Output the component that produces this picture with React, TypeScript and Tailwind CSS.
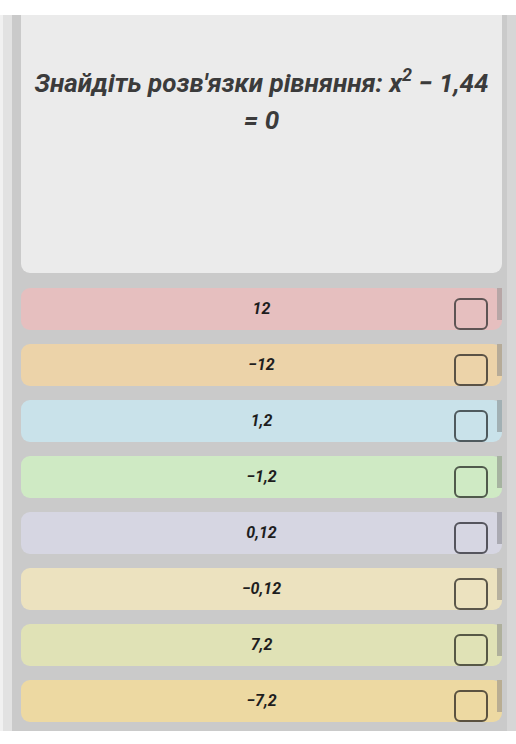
const answers = [
  { label: '12', bg: 'bg-[#e6bfbf]', bar: 'bg-[#b7a6a6]', box: 'border-[#5e5454]' },
  { label: '−12', bg: 'bg-[#ecd3a9]', bar: 'bg-[#b6ab98]', box: 'border-[#5a5246]' },
  { label: '1,2', bg: 'bg-[#c9e2ea]', bar: 'bg-[#a2b0b4]', box: 'border-[#4f5a5e]' },
  { label: '−1,2', bg: 'bg-[#cfeac4]', bar: 'bg-[#a6b3a0]', box: 'border-[#505a4c]' },
  { label: '0,12', bg: 'bg-[#d6d6e2]', bar: 'bg-[#aaaab2]', box: 'border-[#55555d]' },
  { label: '−0,12', bg: 'bg-[#ece2bf]', bar: 'bg-[#b6b09f]', box: 'border-[#5a564a]' },
  { label: '7,2', bg: 'bg-[#e0e2b6]', bar: 'bg-[#afb09c]', box: 'border-[#575846]' },
  { label: '−7,2', bg: 'bg-[#edd9a2]', bar: 'bg-[#b9ad92]', box: 'border-[#5b5240]' },
];

export default function App() {
  return (
    <div className="w-[516px] h-[744px] bg-white overflow-hidden font-['Roboto',sans-serif] pt-[15px]">
      <div className="flex h-[716px]">
        <div className="w-[3px] bg-[#f1f1f1]" />
        <div className="w-[9px] bg-[#e2e2e2]" />
        <div className="w-[495px] bg-[#cacaca] pl-[9px] pr-[5px] pb-[9px] flex flex-col">
          <div className="h-[258px] bg-[#ebebeb] rounded-b-[9px] px-[12px] pt-[50px] text-center">
            <p className="text-[26px] leading-[37px] font-bold italic text-[#3b3b3b]">
              Знайдіть розв'язки рівняння: x<sup className="text-[18px] leading-none relative -top-[11px]">2</sup> − 1,44 = 0
            </p>
          </div>
          <div className="mt-[15px] flex flex-col gap-[14px]">
            {answers.map(a => (
              <div key={a.label} className={`relative h-[42px] rounded-[9px] ${a.bg} flex items-center justify-center`}>
                <span className="text-[16px] font-bold italic text-[#1e1e1e]">{a.label}</span>
                <div className={`absolute right-[14px] top-[10px] w-[34px] h-[32px] rounded-[6px] border-[2.5px] ${a.box}`} />
                <div className={`absolute right-0 top-0 w-[5px] h-[32px] ${a.bar}`} />
              </div>
            ))}
          </div>
        </div>
        <div className="w-[9px] bg-[#d6d6d6]" />
      </div>
    </div>
  );
}
